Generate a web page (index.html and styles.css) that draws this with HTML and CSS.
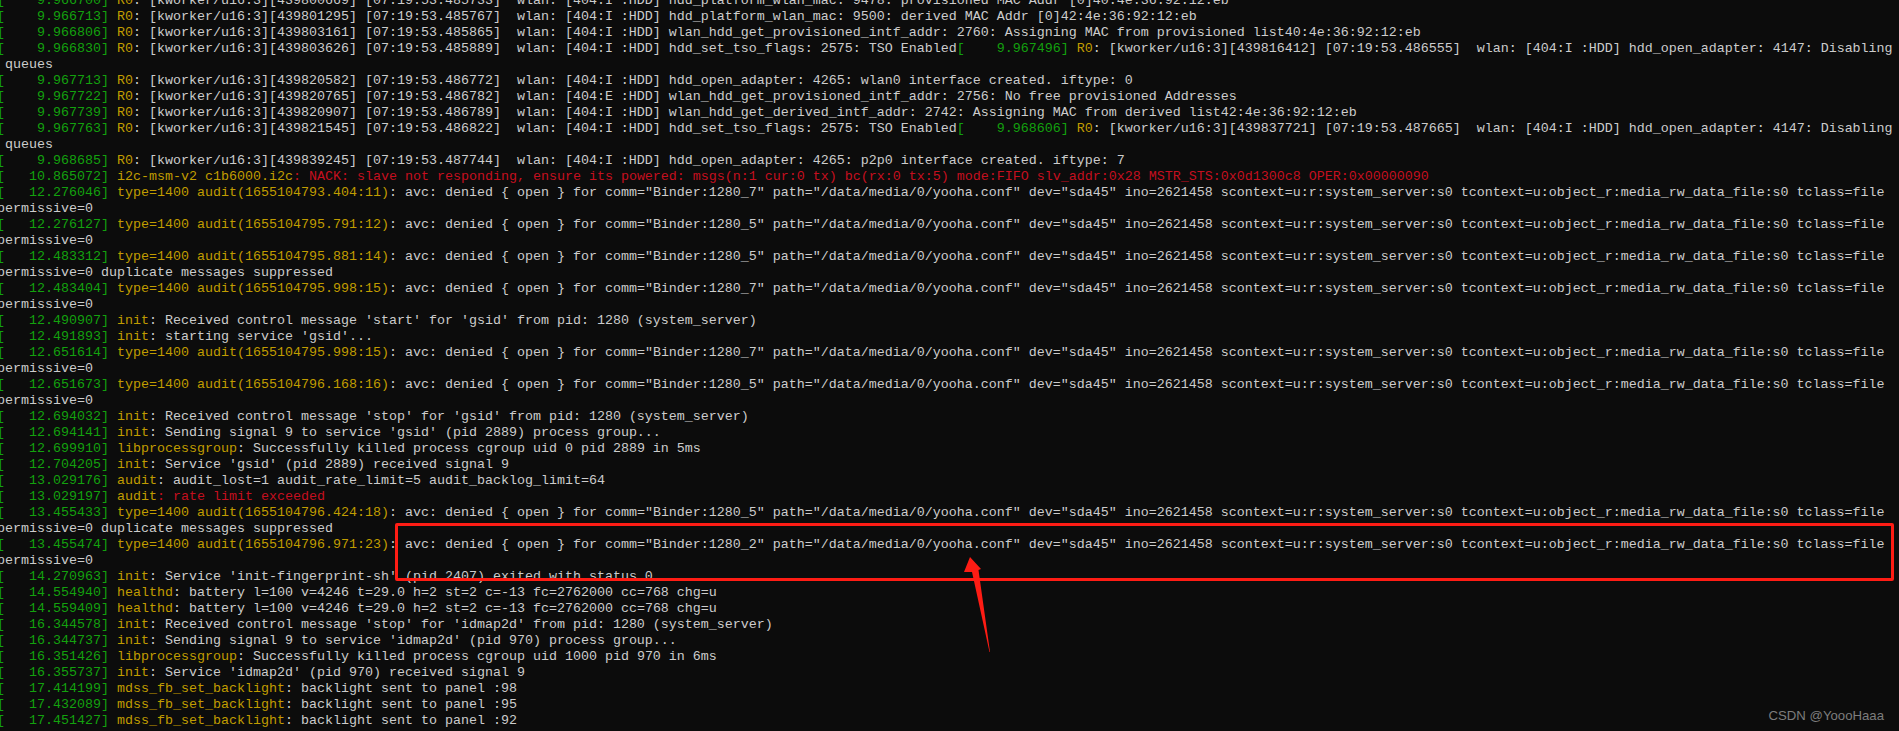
FILE: index.html
```html
<!DOCTYPE html>
<html lang="en">
<head>
<meta charset="utf-8">
<title>dmesg log</title>
<link rel="stylesheet" href="styles.css">
</head>
<body>
<main class="terminal">
<pre class="log"><span class="g">[    9.966700]</span> <span class="y">R0</span>: [kworker/u16:3][439800669] [07:19:53.485733]  wlan: [404:I :HDD] hdd_platform_wlan_mac: 9478: provisioned MAC Addr [0]40:4e:36:92:12:eb
<span class="g">[    9.966713]</span> <span class="y">R0</span>: [kworker/u16:3][439801295] [07:19:53.485767]  wlan: [404:I :HDD] hdd_platform_wlan_mac: 9500: derived MAC Addr [0]42:4e:36:92:12:eb
<span class="g">[    9.966806]</span> <span class="y">R0</span>: [kworker/u16:3][439803161] [07:19:53.485865]  wlan: [404:I :HDD] wlan_hdd_get_provisioned_intf_addr: 2760: Assigning MAC from provisioned list40:4e:36:92:12:eb
<span class="g">[    9.966830]</span> <span class="y">R0</span>: [kworker/u16:3][439803626] [07:19:53.485889]  wlan: [404:I :HDD] hdd_set_tso_flags: 2575: TSO Enabled<span class="g">[    9.967496]</span> <span class="y">R0</span>: [kworker/u16:3][439816412] [07:19:53.486555]  wlan: [404:I :HDD] hdd_open_adapter: 4147: Disabling
 queues
<span class="g">[    9.967713]</span> <span class="y">R0</span>: [kworker/u16:3][439820582] [07:19:53.486772]  wlan: [404:I :HDD] hdd_open_adapter: 4265: wlan0 interface created. iftype: 0
<span class="g">[    9.967722]</span> <span class="y">R0</span>: [kworker/u16:3][439820765] [07:19:53.486782]  wlan: [404:E :HDD] wlan_hdd_get_provisioned_intf_addr: 2756: No free provisioned Addresses
<span class="g">[    9.967739]</span> <span class="y">R0</span>: [kworker/u16:3][439820907] [07:19:53.486789]  wlan: [404:I :HDD] wlan_hdd_get_derived_intf_addr: 2742: Assigning MAC from derived list42:4e:36:92:12:eb
<span class="g">[    9.967763]</span> <span class="y">R0</span>: [kworker/u16:3][439821545] [07:19:53.486822]  wlan: [404:I :HDD] hdd_set_tso_flags: 2575: TSO Enabled<span class="g">[    9.968606]</span> <span class="y">R0</span>: [kworker/u16:3][439837721] [07:19:53.487665]  wlan: [404:I :HDD] hdd_open_adapter: 4147: Disabling
 queues
<span class="g">[    9.968685]</span> <span class="y">R0</span>: [kworker/u16:3][439839245] [07:19:53.487744]  wlan: [404:I :HDD] hdd_open_adapter: 4265: p2p0 interface created. iftype: 7
<span class="g">[   10.865072]</span> <span class="y">i2c-msm-v2 c1b6000.i2c</span><span class="r">: NACK: slave not responding, ensure its powered: msgs(n:1 cur:0 tx) bc(rx:0 tx:5) mode:FIFO slv_addr:0x28 MSTR_STS:0x0d1300c8 OPER:0x00000090</span>
<span class="g">[   12.276046]</span> <span class="y">type=1400 audit(1655104793.404:11)</span>: avc: denied { open } for comm="Binder:1280_7" path="/data/media/0/yooha.conf" dev="sda45" ino=2621458 scontext=u:r:system_server:s0 tcontext=u:object_r:media_rw_data_file:s0 tclass=file
permissive=0
<span class="g">[   12.276127]</span> <span class="y">type=1400 audit(1655104795.791:12)</span>: avc: denied { open } for comm="Binder:1280_5" path="/data/media/0/yooha.conf" dev="sda45" ino=2621458 scontext=u:r:system_server:s0 tcontext=u:object_r:media_rw_data_file:s0 tclass=file
permissive=0
<span class="g">[   12.483312]</span> <span class="y">type=1400 audit(1655104795.881:14)</span>: avc: denied { open } for comm="Binder:1280_5" path="/data/media/0/yooha.conf" dev="sda45" ino=2621458 scontext=u:r:system_server:s0 tcontext=u:object_r:media_rw_data_file:s0 tclass=file
permissive=0 duplicate messages suppressed
<span class="g">[   12.483404]</span> <span class="y">type=1400 audit(1655104795.998:15)</span>: avc: denied { open } for comm="Binder:1280_7" path="/data/media/0/yooha.conf" dev="sda45" ino=2621458 scontext=u:r:system_server:s0 tcontext=u:object_r:media_rw_data_file:s0 tclass=file
permissive=0
<span class="g">[   12.490907]</span> <span class="y">init</span>: Received control message 'start' for 'gsid' from pid: 1280 (system_server)
<span class="g">[   12.491893]</span> <span class="y">init</span>: starting service 'gsid'...
<span class="g">[   12.651614]</span> <span class="y">type=1400 audit(1655104795.998:15)</span>: avc: denied { open } for comm="Binder:1280_7" path="/data/media/0/yooha.conf" dev="sda45" ino=2621458 scontext=u:r:system_server:s0 tcontext=u:object_r:media_rw_data_file:s0 tclass=file
permissive=0
<span class="g">[   12.651673]</span> <span class="y">type=1400 audit(1655104796.168:16)</span>: avc: denied { open } for comm="Binder:1280_5" path="/data/media/0/yooha.conf" dev="sda45" ino=2621458 scontext=u:r:system_server:s0 tcontext=u:object_r:media_rw_data_file:s0 tclass=file
permissive=0
<span class="g">[   12.694032]</span> <span class="y">init</span>: Received control message 'stop' for 'gsid' from pid: 1280 (system_server)
<span class="g">[   12.694141]</span> <span class="y">init</span>: Sending signal 9 to service 'gsid' (pid 2889) process group...
<span class="g">[   12.699910]</span> <span class="y">libprocessgroup</span>: Successfully killed process cgroup uid 0 pid 2889 in 5ms
<span class="g">[   12.704205]</span> <span class="y">init</span>: Service 'gsid' (pid 2889) received signal 9
<span class="g">[   13.029176]</span> <span class="y">audit</span>: audit_lost=1 audit_rate_limit=5 audit_backlog_limit=64
<span class="g">[   13.029197]</span> <span class="y">audit</span><span class="r">: rate limit exceeded</span>
<span class="g">[   13.455433]</span> <span class="y">type=1400 audit(1655104796.424:18)</span>: avc: denied { open } for comm="Binder:1280_5" path="/data/media/0/yooha.conf" dev="sda45" ino=2621458 scontext=u:r:system_server:s0 tcontext=u:object_r:media_rw_data_file:s0 tclass=file
permissive=0 duplicate messages suppressed
<span class="g">[   13.455474]</span> <span class="y">type=1400 audit(1655104796.971:23)</span>: avc: denied { open } for comm="Binder:1280_2" path="/data/media/0/yooha.conf" dev="sda45" ino=2621458 scontext=u:r:system_server:s0 tcontext=u:object_r:media_rw_data_file:s0 tclass=file
permissive=0
<span class="g">[   14.270963]</span> <span class="y">init</span>: Service 'init-fingerprint-sh' (pid 2407) exited with status 0
<span class="g">[   14.554940]</span> <span class="y">healthd</span>: battery l=100 v=4246 t=29.0 h=2 st=2 c=-13 fc=2762000 cc=768 chg=u
<span class="g">[   14.559409]</span> <span class="y">healthd</span>: battery l=100 v=4246 t=29.0 h=2 st=2 c=-13 fc=2762000 cc=768 chg=u
<span class="g">[   16.344578]</span> <span class="y">init</span>: Received control message 'stop' for 'idmap2d' from pid: 1280 (system_server)
<span class="g">[   16.344737]</span> <span class="y">init</span>: Sending signal 9 to service 'idmap2d' (pid 970) process group...
<span class="g">[   16.351426]</span> <span class="y">libprocessgroup</span>: Successfully killed process cgroup uid 1000 pid 970 in 6ms
<span class="g">[   16.355737]</span> <span class="y">init</span>: Service 'idmap2d' (pid 970) received signal 9
<span class="g">[   17.414199]</span> <span class="y">mdss_fb_set_backlight</span>: backlight sent to panel :98
<span class="g">[   17.432089]</span> <span class="y">mdss_fb_set_backlight</span>: backlight sent to panel :95
<span class="g">[   17.451427]</span> <span class="y">mdss_fb_set_backlight</span>: backlight sent to panel :92</pre>
<div class="callout"></div>
<svg class="arrow" viewBox="0 0 30 100" width="30" height="100" aria-hidden="true">
<path d="M10 2 L21 14 L18.5 15 L30 97 L29.5 97 L12 17 L4 17 Z"/>
</svg>
<div class="watermark">CSDN @YoooHaaa</div>
</main>
</body>
</html>
```
FILE: styles.css
```css
html, body {
  margin: 0;
  height: 100%;
  background: #0c0c0c;
}

.terminal {
  position: relative;
  height: 731px;
  overflow: hidden;
  background: #0c0c0c;
}

.log {
  margin: -7px 0 0 -3px;
  font-family: "Liberation Mono", monospace;
  font-size: 13.333px;
  line-height: 16px;
  color: #cccccc;
  white-space: pre;
}

.g { color: #13a10e; }
.y { color: #c19c00; }
.r { color: #c50f1f; }

.callout {
  position: absolute;
  left: 395px;
  top: 523px;
  width: 1493px;
  height: 52px;
  border: 3px solid #ff1c14;
  border-radius: 2px;
}

.arrow {
  position: absolute;
  left: 960px;
  top: 555px;
}

.arrow path {
  fill: #ff1c14;
}

.watermark {
  position: absolute;
  right: 15px;
  top: 708px;
  font-family: "Liberation Sans", Arial, sans-serif;
  font-size: 13.2px;
  line-height: 16px;
  color: #7d7d7d;
}
```
